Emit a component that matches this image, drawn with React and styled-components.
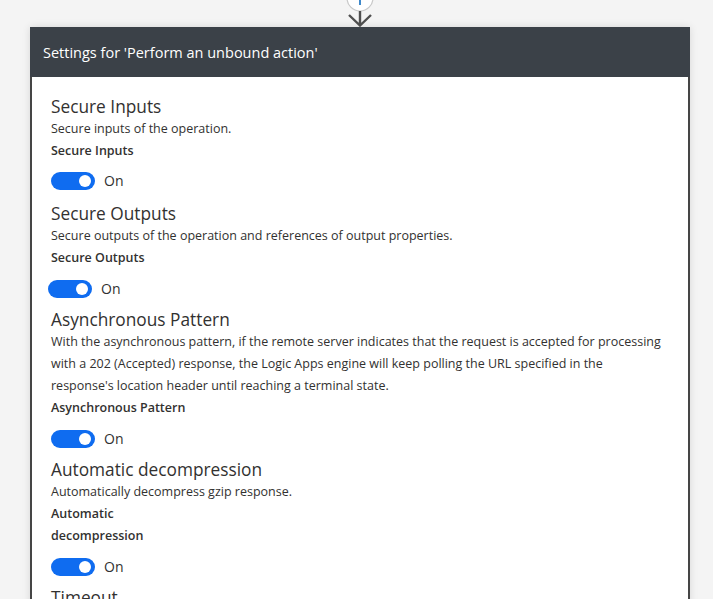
import React from 'react';
import styled, { createGlobalStyle } from 'styled-components';

const Global = createGlobalStyle`
  html, body {
    margin: 0;
    padding: 0;
    background: #f4f4f4;
    font-family: "Open Sans", "Noto Sans", sans-serif;
    color: #323130;
    overflow: hidden;
  }
`;

const Canvas = styled.div`
  width: 713px;
  height: 599px;
  overflow: hidden;
  display: flex;
  flex-direction: column;
`;

const ConnectorSlot = styled.div`
  height: 27px;
  flex: 0 0 27px;
  display: flex;
  justify-content: center;
  padding-left: 7px;
`;

const Card = styled.section`
  margin-left: 30px;
  width: 660px;
  background: #fff;
  box-shadow: 0 0 8px rgba(0, 0, 0, 0.12);
`;

const Header = styled.header`
  height: 50px;
  background: #3b4148;
  color: #fff;
  font-size: 14.5px;
  display: flex;
  align-items: center;
  padding-left: 13px;
`;

const Body = styled.div`
  border-left: 2px solid #454545;
  border-right: 2px solid #454545;
  padding: 19px 24px 40px 19px;
`;

const Setting = styled.div`
  display: flex;
  flex-direction: column;
  padding-bottom: ${p => p.$pad ?? 11}px;
`;

const Title = styled.div`
  font-size: 17.3px;
  line-height: 22px;
  color: #323130;
`;

const Desc = styled.div`
  font-size: 12.5px;
  line-height: 22px;
  color: #323130;
`;

const Label = styled.div`
  font-size: 12.5px;
  line-height: 22px;
  font-weight: 600;
  max-width: 140px;
  color: #323130;
`;

const ToggleRow = styled.label`
  display: flex;
  align-items: center;
  gap: 9px;
  margin-top: ${p => p.$gap}px;
  margin-left: ${p => p.$nudge || 0}px;
  font-size: 14px;
  line-height: 18px;
  color: #323130;
`;

const Track = styled.span`
  width: 44px;
  height: 18px;
  border-radius: 10px;
  background: #0f6cf0;
  display: flex;
  align-items: center;
  justify-content: flex-end;
  padding-right: 4px;
  box-sizing: border-box;
`;

const Knob = styled.span`
  width: 12px;
  height: 12px;
  border-radius: 50%;
  background: #fff;
`;

const settings = [
  {
    title: 'Secure Inputs',
    desc: 'Secure inputs of the operation.',
    label: 'Secure Inputs',
    gap: 10,
    pad: 13,
  },
  {
    title: 'Secure Outputs',
    desc: 'Secure outputs of the operation and references of output properties.',
    label: 'Secure Outputs',
    nudge: -3,
  },
  {
    title: 'Asynchronous Pattern',
    desc: "With the asynchronous pattern, if the remote server indicates that the request is accepted for processing with a 202 (Accepted) response, the Logic Apps engine will keep polling the URL specified in the response's location header until reaching a terminal state.",
    label: 'Asynchronous Pattern',
  },
  {
    title: 'Automatic decompression',
    desc: 'Automatically decompress gzip response.',
    label: 'Automatic decompression',
  },
];

const Toggle = ({ nudge, gap = 11 }) => (
  <ToggleRow $nudge={nudge} $gap={gap}>
    <Track><Knob /></Track>
    On
  </ToggleRow>
);

const Connector = () => (
  <svg width="54" height="27" viewBox="0 0 54 27">
    <circle cx="27" cy="-2" r="13" fill="#fff" stroke="#c8c8c8" strokeWidth="1.2" />
    <path d="M27 -8 V5 M21 -2 H33" stroke="#0f6cbd" strokeWidth="1.6" fill="none" />
    <path d="M27 11 V25 M16 15 L27 25.5 L38 15" stroke="#505050" strokeWidth="2.4" fill="none" />
  </svg>
);

export default function App() {
  return (
    <Canvas>
      <Global />
      <ConnectorSlot>
        <Connector />
      </ConnectorSlot>
      <Card>
        <Header>Settings for 'Perform an unbound action'</Header>
        <Body>
          {settings.map(s => (
            <Setting key={s.title} $pad={s.pad}>
              <Title>{s.title}</Title>
              <Desc>{s.desc}</Desc>
              <Label>{s.label}</Label>
              <Toggle nudge={s.nudge} gap={s.gap} />
            </Setting>
          ))}
          <Setting>
            <Title>Timeout</Title>
          </Setting>
        </Body>
      </Card>
    </Canvas>
  );
}
